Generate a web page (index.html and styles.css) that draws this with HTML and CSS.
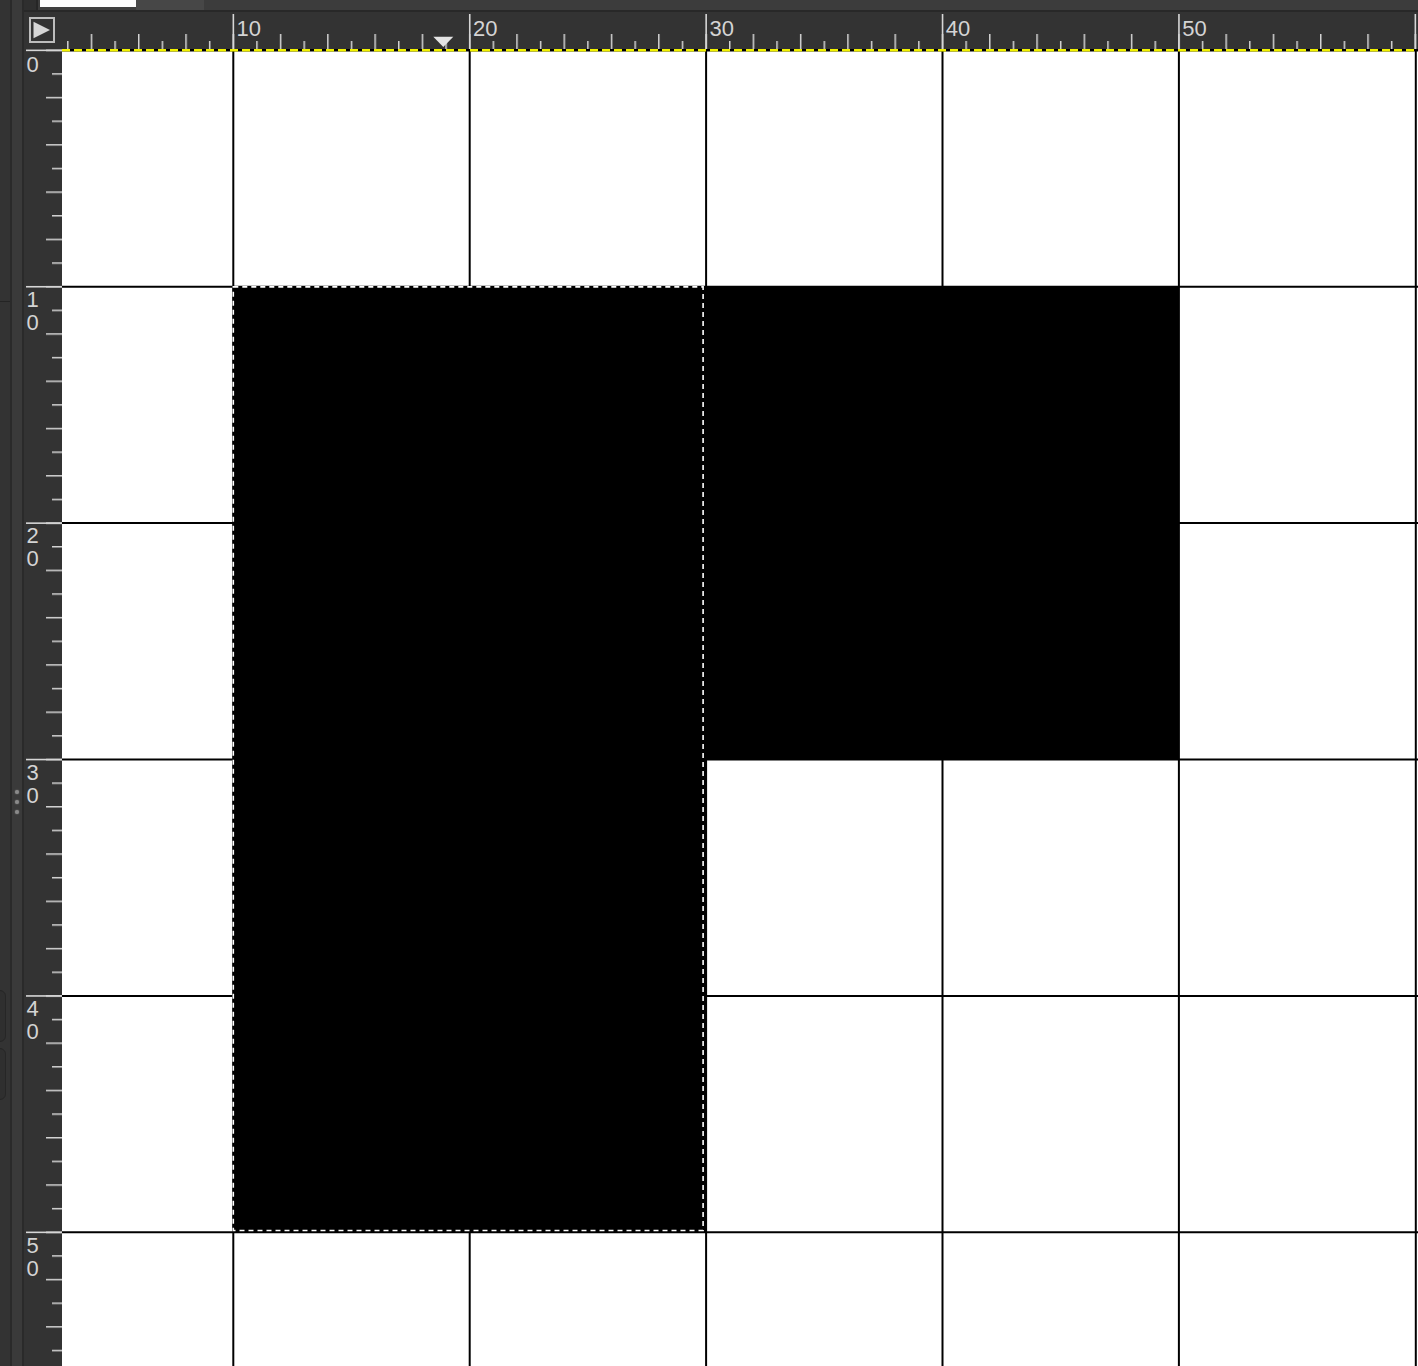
FILE: index.html
```html
<!DOCTYPE html>
<html>
<head>
<meta charset="utf-8">
<title>Canvas</title>
<link rel="stylesheet" href="styles.css">
</head>
<body>
<div class="app">
  <aside class="dock">
    <div class="dock-a">
      <div class="dock-line"></div>
      <div class="dock-btn first"></div>
      <div class="dock-btn"></div>
    </div>
    <div class="dock-sep"></div>
    <div class="dock-b">
      <div class="grip"><span></span><span></span><span></span></div>
    </div>
    <div class="dock-sep"></div>
  </aside>
  <main class="view">
    <div class="tabbar">
      <div class="tab-lead"></div>
      <div class="tab-active"></div>
      <div class="tab-other"></div>
    </div>
    <div class="workspace">
      <div class="corner">
        <svg width="26" height="26" viewBox="0 0 26 26">
          <rect x="1" y="1" width="24" height="24" fill="none" stroke="#bdbdbd" stroke-width="2"/>
          <polygon points="4.5,4.7 21,13 4.5,21.3" fill="#d6d6d6"/>
        </svg>
      </div>
      <div class="hruler">
        <svg width="1356" height="37" viewBox="0 0 1356 37">
          <defs>
            <pattern id="ht" patternUnits="userSpaceOnUse" x="170.55" y="0" width="47.28" height="37">
              <rect x="0" y="22" width="1.5" height="15" fill="#d4d4d4"/>
              <rect x="23.64" y="29" width="1.5" height="8" fill="#d4d4d4"/>
            </pattern>
          </defs>
          <rect x="0" y="0" width="1356" height="37" fill="url(#ht)"/>
          <g fill="#d6d6d6">
            <rect x="170.55" y="2" width="1.6" height="35"/>
            <rect x="406.95" y="2" width="1.6" height="35"/>
            <rect x="643.35" y="2" width="1.6" height="35"/>
            <rect x="879.75" y="2" width="1.6" height="35"/>
            <rect x="1116.15" y="2" width="1.6" height="35"/>
            <rect x="1352.55" y="2" width="1.6" height="35"/>
          </g>
          <g class="rlabel">
            <text x="174.6" y="23.9">10</text>
            <text x="411" y="23.9">20</text>
            <text x="647.4" y="23.9">30</text>
            <text x="883.8" y="23.9">40</text>
            <text x="1120.2" y="23.9">50</text>
          </g>
          <polygon points="371.3,24.7 391.3,24.7 381.3,35" fill="#e4e4e4"/>
        </svg>
      </div>
      <div class="vruler">
        <svg width="38" height="1317" viewBox="0 0 38 1317">
          <defs>
            <pattern id="vt" patternUnits="userSpaceOnUse" x="0" y="0.55" width="38" height="47.28">
              <rect x="22" y="0" width="16" height="1.5" fill="#d4d4d4"/>
              <rect x="28" y="23.64" width="10" height="1.5" fill="#d4d4d4"/>
            </pattern>
          </defs>
          <rect x="0" y="0" width="38" height="1317" fill="url(#vt)"/>
          <g fill="#d6d6d6">
            <rect x="2" y="0.55" width="36" height="1.6"/>
            <rect x="2" y="236.95" width="36" height="1.6"/>
            <rect x="2" y="473.35" width="36" height="1.6"/>
            <rect x="2" y="709.75" width="36" height="1.6"/>
            <rect x="2" y="946.15" width="36" height="1.6"/>
            <rect x="2" y="1182.55" width="36" height="1.6"/>
          </g>
          <g class="rlabel">
            <text x="2.5" y="22.6">0</text>
            <text x="2.5" y="257.9">1</text><text x="2.5" y="280.9">0</text>
            <text x="2.5" y="494.3">2</text><text x="2.5" y="517.3">0</text>
            <text x="2.5" y="730.7">3</text><text x="2.5" y="753.7">0</text>
            <text x="2.5" y="967.1">4</text><text x="2.5" y="990.1">0</text>
            <text x="2.5" y="1203.5">5</text><text x="2.5" y="1226.5">0</text>
          </g>
        </svg>
      </div>
      <div class="canvas">
        <svg width="1356" height="1317" viewBox="0 0 1356 1317">
          <rect x="0" y="0" width="1356" height="1317" fill="#ffffff"/>
          <rect x="171.3" y="237.7" width="472.8" height="945.6" fill="#000"/>
          <rect x="644.1" y="237.7" width="472.8" height="472.8" fill="#000"/>
          <g stroke="#000" stroke-width="2">
            <line x1="171.3" y1="0" x2="171.3" y2="1317"/>
            <line x1="407.7" y1="0" x2="407.7" y2="1317"/>
            <line x1="644.1" y1="0" x2="644.1" y2="1317"/>
            <line x1="880.5" y1="0" x2="880.5" y2="1317"/>
            <line x1="1116.9" y1="0" x2="1116.9" y2="1317"/>
            <line x1="1353.8" y1="0" x2="1353.8" y2="1317"/>
            <line x1="0" y1="237.7" x2="1356" y2="237.7"/>
            <line x1="0" y1="474.1" x2="1356" y2="474.1"/>
            <line x1="0" y1="710.5" x2="1356" y2="710.5"/>
            <line x1="0" y1="946.9" x2="1356" y2="946.9"/>
            <line x1="0" y1="1183.3" x2="1356" y2="1183.3"/>
          </g>
          <rect x="171.3" y="237.9" width="469.8" height="943.6" fill="none" stroke="#000" stroke-width="1.6"/>
          <rect x="171.3" y="237.9" width="469.8" height="943.6" fill="none" stroke="#ffffff" stroke-width="1.6" stroke-dasharray="5 4"/>
          <line x1="0" y1="1.3" x2="1356" y2="1.3" stroke="#000" stroke-width="2.6"/>
          <line x1="0" y1="1.3" x2="1356" y2="1.3" stroke="#f2f200" stroke-width="2.6" stroke-dasharray="8 4"/>
        </svg>
      </div>
    </div>
  </main>
</div>
</body>
</html>
```

FILE: styles.css
```css
html, body {
  margin: 0;
  padding: 0;
}
body {
  width: 1418px;
  height: 1366px;
  overflow: hidden;
  background: #333333;
  font-family: "Liberation Sans", Arial, sans-serif;
}
.app {
  display: flex;
  width: 1418px;
  height: 1366px;
}
.dock {
  display: flex;
  width: 24px;
  height: 1366px;
  flex: none;
}
.dock-a {
  width: 10px;
  background: #333333;
  display: flex;
  flex-direction: column;
}
.dock-line {
  margin-top: 301px;
  height: 1px;
  background: #242424;
}
.dock-btn {
  margin-left: -8px;
  width: 12px;
  height: 50px;
  border: 1px solid #262626;
  border-radius: 6px;
  background: #2f2f2f;
  margin-top: 6px;
}
.dock-btn.first {
  margin-top: 688px;
}
.dock-sep {
  width: 2px;
  background: #2a2a2a;
}
.dock-b {
  width: 10px;
  background: #3a3a3a;
  display: flex;
  flex-direction: column;
  align-items: center;
}
.grip {
  margin-top: 790px;
  display: flex;
  flex-direction: column;
  gap: 6px;
}
.grip span {
  display: block;
  width: 4px;
  height: 4px;
  border-radius: 50%;
  background: #8a8a8a;
  box-shadow: 0 0 1.5px #8a8a8a;
}
.view {
  display: flex;
  flex-direction: column;
  width: 1394px;
}
.tabbar {
  display: flex;
  height: 10px;
  background: #3c3c3c;
  border-bottom: 2px solid #282828;
  flex: none;
}
.tab-lead {
  width: 12px;
  background: #2f2f2f;
  border-right: 2px solid #262626;
}
.tab-active {
  margin-left: 2px;
  width: 96px;
  height: 7px;
  background: #fbfbfb;
}
.tab-other {
  width: 68px;
  background: #474747;
}
.workspace {
  display: grid;
  grid-template-columns: 38px 1356px;
  grid-template-rows: 37px 1317px;
}
.corner {
  background: #333333;
  padding: 5px 0 0 5px;
  box-sizing: border-box;
}
.corner svg, .hruler svg, .vruler svg, .canvas svg {
  display: block;
}
.hruler, .vruler {
  background: #333333;
  overflow: hidden;
}
.canvas {
  overflow: hidden;
  background: #ffffff;
}
.rlabel text {
  font-family: "Liberation Sans", Arial, sans-serif;
  font-size: 22px;
  fill: #d4d4d4;
}
```
